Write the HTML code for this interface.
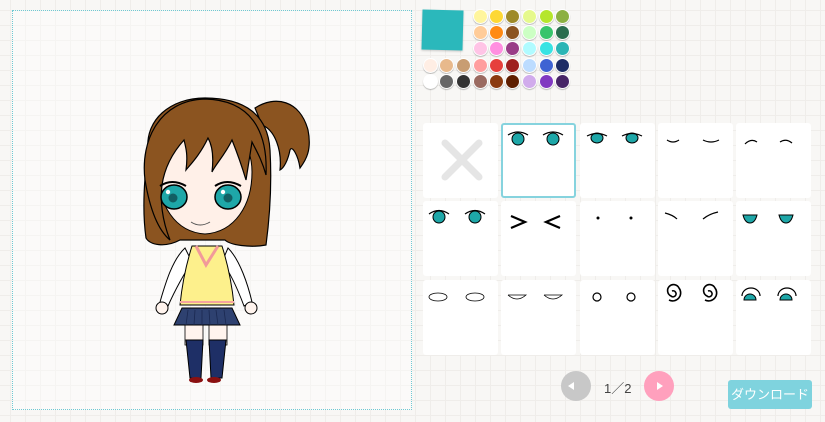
<!DOCTYPE html>
<html><head><meta charset="utf-8"><style>
*{margin:0;padding:0;box-sizing:border-box}
body{width:825px;height:422px;overflow:hidden;position:relative;font-family:"Liberation Sans","Noto Sans CJK JP",sans-serif;
background-color:#f8f7f5;background-image:linear-gradient(#efedea 1px,transparent 1px),linear-gradient(90deg,#efedea 1px,transparent 1px);background-size:15px 15px;background-position:-5px -5px}
#stage{position:absolute;left:12px;top:10px;width:400px;height:400px;border:1px dotted #6fc9d3;background:rgba(255,255,255,.4)}
.sw{position:absolute;width:15px;height:15px;border-radius:50%;box-shadow:0 1px 1px rgba(0,0,0,.25);border:1px solid #fff}
.tile{position:absolute;width:75px;height:75px;background:#fff;border-radius:3px;z-index:-1}
.sel{border:2px solid #86d3de}
.nav{position:absolute;width:30px;height:30px;border-radius:50%;top:371px}
svg{z-index:1}
</style></head><body>
<div id="stage"></div>
<svg style="position:absolute;left:0;top:0" width="825" height="422">
<path d="M255 108 C275 95 300 100 308 130 C312 150 306 160 300 168 C298 155 292 145 290 150 C288 160 284 168 280 170 C282 150 275 130 262 125Z" fill="#8b5420" stroke="#000" stroke-width="1.2"/>
<path d="M148 150 C145 120 170 98 205 98 C245 98 268 115 270 150 C272 185 270 215 266 245 C250 248 230 245 225 240 L180 240 C165 248 150 245 146 238 C142 210 144 180 148 150Z" fill="#8b5420" stroke="#000" stroke-width="1.2"/>
<path d="M185 248 C172 260 165 285 160 302 L168 306 C175 290 185 272 192 262Z" fill="#fff" stroke="#000" stroke-width="1"/>
<path d="M228 248 C240 260 248 285 252 302 L244 306 C238 290 230 272 222 262Z" fill="#fff" stroke="#000" stroke-width="1"/>
<circle cx="162" cy="308" r="6" fill="#fff4ee" stroke="#000" stroke-width="1"/>
<circle cx="251" cy="308" r="6" fill="#fff4ee" stroke="#000" stroke-width="1"/>
<rect x="185" y="325" width="18" height="20" fill="#fff4ee" stroke="#000" stroke-width=".8"/>
<rect x="209" y="325" width="18" height="20" fill="#fff4ee" stroke="#000" stroke-width=".8"/>
<path d="M186 340 L203 340 L201 378 L190 378Z" fill="#1e2f66" stroke="#000" stroke-width="1"/>
<path d="M209 340 L226 340 L222 378 L211 378Z" fill="#1e2f66" stroke="#000" stroke-width="1"/>
<ellipse cx="196" cy="380" rx="7" ry="3" fill="#8a1010"/>
<ellipse cx="214" cy="380" rx="7" ry="3" fill="#8a1010"/>
<path d="M192 246 L222 246 C228 265 232 285 234 305 L180 305 C182 285 186 265 192 246Z" fill="#fdf08c" stroke="#000" stroke-width="1"/>
<path d="M196 246 L206 265 L218 246" fill="none" stroke="#f29a9a" stroke-width="3"/>
<line x1="180" y1="302" x2="234" y2="302" stroke="#f6a4a0" stroke-width="2"/>
<path d="M182 308 L232 308 L240 325 L174 325Z" fill="#2e4170" stroke="#000" stroke-width="1"/>
<path d="M188 310 L186 325 M195 310 L194 325 M202 310 L202 325 M209 310 L210 325 M216 310 L218 325 M224 310 L226 325" stroke="#1a2850" stroke-width=".8"/>
<path d="M158 170 C158 140 180 128 205 128 C232 128 252 140 252 172 C252 205 235 232 205 234 C175 232 158 205 158 170Z" fill="#fff0e8" stroke="#000" stroke-width="1"/>
<path d="M145 180 C140 140 160 100 205 99 C250 100 268 130 266 175 C262 160 256 150 252 142 L246 180 C240 160 236 150 232 140 C225 155 215 165 212 172 C214 155 212 145 208 138 C200 155 190 165 186 170 C188 155 186 148 184 140 C175 150 165 165 162 185 C160 200 162 220 170 240 C158 230 150 210 145 180Z" fill="#8b5420" stroke="#000" stroke-width="1.2"/>
<ellipse cx="174" cy="197" rx="13" ry="12" fill="#1ea7a8" stroke="#000" stroke-width="1.5"/>
<circle cx="173" cy="198" r="4.5" fill="#125f63"/>
<circle cx="168" cy="192" r="2.2" fill="#fff"/>
<ellipse cx="228" cy="197" rx="13" ry="12" fill="#1ea7a8" stroke="#000" stroke-width="1.5"/>
<circle cx="228" cy="198" r="4.5" fill="#125f63"/>
<circle cx="223" cy="192" r="2.2" fill="#fff"/>
<path d="M160 186 q12 -8 26 0 M215 186 q12 -8 26 0" fill="none" stroke="#000" stroke-width="2"/>
<path d="M191 222 Q200 228 210 222" fill="none" stroke="#555" stroke-width="1"/>
<g fill="#1ea7a8" stroke="#000" stroke-width="1">
<circle cx="518" cy="139" r="6"/><circle cx="553" cy="139" r="6"/>
<ellipse cx="597" cy="138" rx="6" ry="5"/><ellipse cx="632" cy="138" rx="6" ry="5"/>
<circle cx="439" cy="217" r="6"/><circle cx="475" cy="217" r="6"/>
<path d="M743 215 h14 q-2 8 -7 8 q-5 0 -7 -8z"/><path d="M779 215 h14 q-2 8 -7 8 q-5 0 -7 -8z"/>
<path d="M744 300 a6 6 0 0 1 12 0z"/><path d="M780 300 a6 6 0 0 1 12 0z"/>
</g>
<g fill="none" stroke="#000" stroke-width="1.2">
<path d="M508 135 q10 -6 20 0 M543 135 q10 -6 20 0 M587 136 q10 -5 20 0 M622 136 q10 -5 20 0 M429 214 q10 -7 20 0 M465 214 q10 -7 20 0"/>
<path d="M667 140 q6 4 12 0 M703 140 q8 4 16 0"/>
<path d="M745 144 q6 -6 12 -2 M780 142 q6 -4 12 1"/>
<path d="M511 216 l14 6 l-14 6 M560 216 l-14 6 l14 6" stroke-width="2.2"/>
<path d="M665 213 q8 2 12 6 M703 219 q6 -5 15 -7"/>
<ellipse cx="438" cy="297" rx="9" ry="4" stroke-width=".8"/><ellipse cx="475" cy="297" rx="9" ry="4" stroke-width=".8"/>
<path d="M508 295 h18 q-9 8 -18 0 M544 295 h18 q-9 8 -18 0" stroke-width=".8"/>
<circle cx="597" cy="297" r="4"/><circle cx="631" cy="297" r="4"/>
<path d="M672 291 a3 3 0 1 1 -1 5 a6 6 0 1 1 8 -8 a8 8 0 0 1 -10 12" stroke-width="1.6"/>
<path d="M708 291 a3 3 0 1 1 -1 5 a6 6 0 1 1 8 -8 a8 8 0 0 1 -10 12" stroke-width="1.6"/>
<path d="M742 296 a9 8 0 0 1 18 0 M778 296 a9 8 0 0 1 18 0"/>
</g>
<circle cx="598" cy="218" r="1.5"/><circle cx="631" cy="218" r="1.5"/>
<path d="M445 143 l34 34 M479 143 l-34 34" stroke="#e5e5e5" stroke-width="7" stroke-linecap="round"/>
</svg>
<div style="position:absolute;left:422px;top:10px;width:41px;height:40px;background:#2bb8bb;transform:rotate(1.5deg);box-shadow:0 1px 2px rgba(0,0,0,.2)"></div>
<div id="sw"></div>
<script>
var rows=[[null,null,null,"#fff59d","#fdd835","#9e8a28","#e6f98c","#b5e62c","#8bb041"],
[null,null,null,"#ffcc99","#ff8a14","#8b5420","#ccffc4","#38c46c","#2a6d4e"],
[null,null,null,"#ffc4e6","#ff8fe0","#993d87","#b0fbff","#38e3e3","#2bb5b5"],
["#ffeee4","#e8b98c","#c89d72","#ff9e9e","#e63f3c","#9e1f1f","#bcdcff","#3e63d3","#1d2c66"],
["#ffffff","#666666","#333333","#9a6a60","#8b3a10","#5e1e00","#d1acec","#8139c1","#462466"]];
var h="",xs=[431,447,464,481,497,513,530,547,563],ys=[17,33,49,66,82];
rows.forEach(function(r,i){r.forEach(function(c,j){if(c)h+='<div class="sw" style="left:'+(xs[j]-8)+'px;top:'+(ys[i]-8)+'px;background:'+c+'"></div>';});});
var tx=[423,501,580,658,736],ty=[123,201,280];
ty.forEach(function(y,i){tx.forEach(function(x,j){h+='<div class="tile'+(i==0&&j==1?' sel':'')+'" style="left:'+x+'px;top:'+y+'px"></div>';});});
document.getElementById("sw").innerHTML=h;
</script>
<div class="nav" style="left:561px;background:#c8c8c8"></div>
<div class="nav" style="left:644px;background:#ffa0bd"></div>
<div style="position:absolute;left:568px;top:382px;width:0;height:0;border:4px solid transparent;border-right:6px solid #fff;border-left:0"></div>
<div style="position:absolute;left:657px;top:382px;width:0;height:0;border:4px solid transparent;border-left:6px solid #fff;border-right:0"></div>
<div style="position:absolute;left:604px;top:378px;font-size:13px;color:#444">1／2</div>
<div style="position:absolute;left:728px;top:380px;width:84px;height:29px;background:#7fd3de;border-radius:3px;color:#fff;font-size:13px;line-height:29px;text-align:center">ダウンロード</div>
</body></html>
